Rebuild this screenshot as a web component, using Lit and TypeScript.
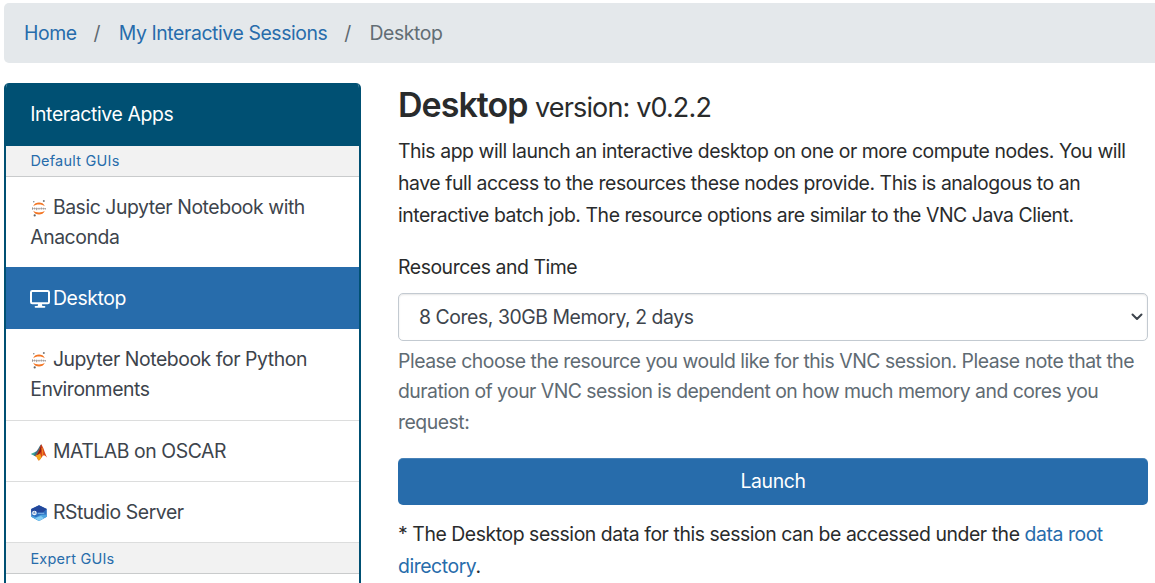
import { LitElement, html, css } from "lit";
import { customElement } from "lit/decorators.js";

const jupyter = html`<svg class="ico" viewBox="0 0 18 18">
  <path d="M3.200 7.200C4.200 4.600 6.500 3.600 9 3.600s4.800 1 5.800 3.600C13.200 6 11.400 5.500 9 5.500s-4.200.5-5.800 1.700z" fill="#f37726"/>
  <path d="M3.200 11.800C4.200 14.400 6.500 15.600 9 15.600s4.800-1.200 5.800-3.800C13.200 13 11.400 13.500 9 13.500s-4.200-.5-5.800-1.700z" fill="#f37726"/>
  <path d="M2.500 8.400v2.300M4.600 8.600v1.800M6.700 8.700v2.500M9 8.800v1.800M11.300 8.500v2M13.400 8.800v1.700M15.300 9v1.500" stroke="#8a8484" stroke-width=".9"/>
  <path d="M2.500 9.600h12.800" stroke="#a79d9a" stroke-width=".7"/>
  <circle cx="3.800" cy="2.800" r=".7" fill="#777"/><circle cx="13.800" cy="2" r="1" fill="#777"/><circle cx="4.700" cy="16.400" r="1.100" fill="#666"/>
</svg>`;

const desktop = html`<svg class="ico mon" viewBox="0 0 20 18">
  <rect x="1" y="1" width="18" height="12.200" rx="1.300" fill="none" stroke="#fff" stroke-width="2"/>
  <path d="M8.300 13h3.400l.6 3h2.200a.8.800 0 0 1 0 1.700h-9a.8.800 0 0 1 0-1.700h2.200z" fill="#fff"/>
</svg>`;

const matlab = html`<svg class="ico" viewBox="0 0 18 18">
  <path d="M.8 10.900L5.600 8.700 8 10.700 5.200 13.200z" fill="#3aa79a"/>
  <path d="M5.600 8.700C8 7.800 9.200 3 11.200 1.300L9.800 8 6.500 12.600 5.200 13.200 4 12.300z" fill="#3f6f80"/>
  <path d="M11.200 1.300C9.900 4.500 9.200 8.500 5.200 13.200c1.700-.2 2.300 3.200 3.500 4.300 2-.7 3.200-4.600 4.700-5.100 1.300-.3 2.400.9 3.800 2.200C15 11 13.400 3.800 11.200 1.300z" fill="#d9461d"/>
  <path d="M5.200 13.200c1.700-.2 2.300 3.200 3.500 4.300 1.300-.5 2-1.900 2.800-3.300L9.800 10z" fill="#f5a81c"/>
  <path d="M11.200 1.300C10.300 4.500 9.600 8.500 6.600 12c2.600-.5 4.200-1.900 4.800-4.700z" fill="#8e1f12"/>
  <path d="M12 5c.6 2.500.9 5 .6 8" stroke="#f08a24" stroke-width="1.100" fill="none"/>
</svg>`;

const rstudio = html`<svg class="ico" viewBox="0 0 18 18">
  <path d="M9 1.300l7.800 3.800v7.700L9 17 1.200 12.800V5.100z" fill="#2d6fc0"/>
  <path d="M9 1.300l7.800 3.800-4 3.400H1.200V5.100z" fill="#23479b"/>
  <path d="M1.200 11.500L6 13.200l5-2.400 5.800-.4v2.400L9 17 1.200 12.800z" fill="#4fa6e0"/>
  <path d="M9 17l-4-2.800 6-2.200 3 2.300z" fill="#86cdf2"/>
  <circle cx="4.400" cy="9" r="2.300" fill="#fff"/><path d="M3.900 10.200V7.900h.9v1.200l.5 1.100" stroke="#3c6fb5" stroke-width=".7" fill="none"/>
  <path d="M7.800 9.300h6.500" stroke="#8fbfec" stroke-width=".9"/>
</svg>`;

@customElement("app-root")
class AppRoot extends LitElement {
  static styles = css`
    :host { display: block; box-sizing: border-box; width: 100%; height: 583px; overflow: hidden; background: #fff;
      font-family: Inter, "Liberation Sans", sans-serif; font-size: 19.4px; letter-spacing: -0.435px; color: #292b2c; padding: 3px 0 0 4px; }
    * { box-sizing: border-box; }
    a { color: #276cab; text-decoration: none; }
    .crumbs { display: flex; align-items: center; height: 60px; padding-left: 20px; background: #e4e8eb; border-radius: 5px 0 0 5px; white-space: pre; letter-spacing: -.4px; }
    .sep { width: 42px; padding-right: 2px; text-align: center; color: #5f6a71; }
    .cur { color: #626d74; }
    .body { display: flex; margin-top: 20px; gap: 37px; align-items: flex-start; }
    .side { width: 357px; height: 520px; flex: none; border: 2px solid #005073; border-top: 0; border-radius: 5px 5px 0 0; overflow: hidden; }
    .head { height: 63px; margin: 0 -2px; padding: 0 0 2px 26.200px; background: #005073; color: #fff; display: flex; align-items: center; letter-spacing: -.37px; }
    .group { height: 31px; padding: 0 0 2px 24.400px; display: flex; align-items: center; background: #f2f2f2; border-bottom: 1px solid #c9cbcc; color: #276cab; font-size: 14.500px; letter-spacing: .22px; }
    .item + .group { padding-bottom: 0; }
    .item { display: block; height: 61px; padding: 15px 20px 0 24.200px; line-height: 30px; border-bottom: 1px solid #dcdddd; color: #3d444c; white-space: nowrap; }
    .two { height: 92px; }
    .first { height: 90px; border-bottom: 0; }
    .active { height: 62px; padding-top: 16px; background: #276cab; border: 0; color: #fff; letter-spacing: -.38px; }
    .ico { width: 18px; height: 18px; vertical-align: -3px; margin-right: 4.700px; }
    .mon { width: 20px; margin-right: 2.700px; }
    .main { width: 750px; display: flex; flex-direction: column; white-space: nowrap; }
    h1 { margin: 1px 0 0; height: 42px; line-height: 42px; font-size: 34px; font-weight: 600; letter-spacing: -.98px; }
    .ver { font-size: 27px; font-weight: 400; letter-spacing: -.86px; }
    p { margin: 9px 0 0; line-height: 32px; }
    label { margin-top: 20px; line-height: 32px; }
    .select { margin-top: 10px; height: 48px; border: 1px solid #c3cad1; border-radius: 5px; box-shadow: inset 0 1px 2px #0000001a; display: flex; align-items: center; justify-content: space-between; padding: 0 4px 0 20px; color: #3d444c; }
    .chev { width: 12px; height: 8px; }
    .help { line-height: 30.400px; color: #5f6b73; margin-top: 5px; letter-spacing: -.475px; }
    .tight { letter-spacing: -.525px; }
    .btn { margin-top: 21px; height: 47px; font: inherit; letter-spacing: -.4px; color: #fff; background: #276cab; border: 0; border-radius: 5px; box-shadow: inset 0 1px 0 #ffffff26; padding: 0 0 2px; }
    .note { margin-top: 13px; }
  `;
  render() {
    return html`
      <nav class="crumbs"><a href="#">Home</a><span class="sep">/</span><a href="#">My Interactive Sessions</a><span class="sep">/</span><span class="cur">Desktop</span></nav>
      <div class="body">
        <aside class="side">
          <div class="head">Interactive Apps</div>
          <div class="group">Default GUIs</div>
          <a class="item first">${jupyter}<span>Basic Jupyter Notebook with<br>Anaconda</span></a>
          <a class="item active">${desktop}<span>Desktop</span></a>
          <a class="item two">${jupyter}<span>Jupyter Notebook for Python<br>Environments</span></a>
          <a class="item">${matlab}<span>MATLAB on OSCAR</span></a>
          <a class="item">${rstudio}<span>RStudio Server</span></a>
          <div class="group">Expert GUIs</div>
        </aside>
        <main class="main">
          <h1>Desktop <span class="ver">version: v0.2.2</span></h1>
          <p>This app will launch an interactive desktop on one or more compute nodes. You will<br>have full access to the resources these nodes provide. This is analogous to an<br>interactive batch job. The resource options are similar to the VNC Java Client.</p>
          <label>Resources and Time</label>
          <div class="select"><span>8 Cores, 30GB Memory, 2 days</span><svg class="chev" viewBox="0 0 12 8"><path d="M1.500 1.500L6 6l4.500-4.500" fill="none" stroke="#3d444c" stroke-width="2" stroke-linecap="round" stroke-linejoin="round"/></svg></div>
          <div class="help">Please choose the resource you would like for this VNC session. Please note that the<br><span class="tight">duration of your VNC session is dependent on how much memory and cores you</span><br>request:</div>
          <button class="btn">Launch</button>
          <p class="note">* The Desktop session data for this session can be accessed under the <a href="#">data root<br>directory</a>.</p>
        </main>
      </div>`;
  }
}
